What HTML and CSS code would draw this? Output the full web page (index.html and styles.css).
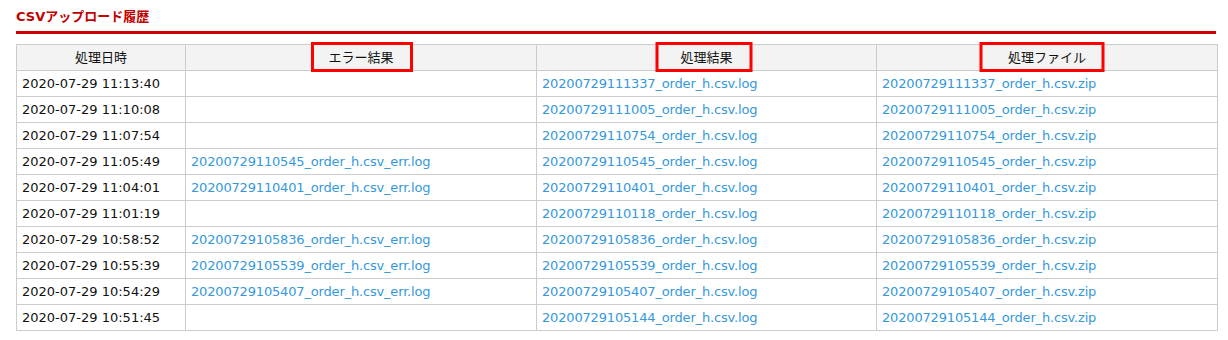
FILE: index.html
```html
<!DOCTYPE html>
<html lang="ja">
<head>
<meta charset="utf-8">
<title>CSVアップロード履歴</title>
<link rel="stylesheet" href="styles.css">
</head>
<body>
<div class="page">
  <h2 class="title">CSVアップロード履歴</h2>
  <table class="history">
    <colgroup>
      <col class="c1"><col class="c2"><col class="c3"><col class="c4">
    </colgroup>
    <thead>
      <tr>
        <th>処理日時</th>
        <th class="marked"><span class="box box-err"></span>エラー結果</th>
        <th class="marked"><span class="box box-res"></span>処理結果</th>
        <th class="marked"><span class="box box-file"></span>処理ファイル</th>
      </tr>
    </thead>
    <tbody>
      <tr><td>2020-07-29 11:13:40</td><td></td><td><a href="#">20200729111337_order_h.csv.log</a></td><td><a href="#">20200729111337_order_h.csv.zip</a></td></tr>
      <tr><td>2020-07-29 11:10:08</td><td></td><td><a href="#">20200729111005_order_h.csv.log</a></td><td><a href="#">20200729111005_order_h.csv.zip</a></td></tr>
      <tr><td>2020-07-29 11:07:54</td><td></td><td><a href="#">20200729110754_order_h.csv.log</a></td><td><a href="#">20200729110754_order_h.csv.zip</a></td></tr>
      <tr><td>2020-07-29 11:05:49</td><td><a href="#">20200729110545_order_h.csv_err.log</a></td><td><a href="#">20200729110545_order_h.csv.log</a></td><td><a href="#">20200729110545_order_h.csv.zip</a></td></tr>
      <tr><td>2020-07-29 11:04:01</td><td><a href="#">20200729110401_order_h.csv_err.log</a></td><td><a href="#">20200729110401_order_h.csv.log</a></td><td><a href="#">20200729110401_order_h.csv.zip</a></td></tr>
      <tr><td>2020-07-29 11:01:19</td><td></td><td><a href="#">20200729110118_order_h.csv.log</a></td><td><a href="#">20200729110118_order_h.csv.zip</a></td></tr>
      <tr><td>2020-07-29 10:58:52</td><td><a href="#">20200729105836_order_h.csv_err.log</a></td><td><a href="#">20200729105836_order_h.csv.log</a></td><td><a href="#">20200729105836_order_h.csv.zip</a></td></tr>
      <tr><td>2020-07-29 10:55:39</td><td><a href="#">20200729105539_order_h.csv_err.log</a></td><td><a href="#">20200729105539_order_h.csv.log</a></td><td><a href="#">20200729105539_order_h.csv.zip</a></td></tr>
      <tr><td>2020-07-29 10:54:29</td><td><a href="#">20200729105407_order_h.csv_err.log</a></td><td><a href="#">20200729105407_order_h.csv.log</a></td><td><a href="#">20200729105407_order_h.csv.zip</a></td></tr>
      <tr><td>2020-07-29 10:51:45</td><td></td><td><a href="#">20200729105144_order_h.csv.log</a></td><td><a href="#">20200729105144_order_h.csv.zip</a></td></tr>
    </tbody>
  </table>
</div>
</body>
</html>
```
FILE: styles.css
```css
html, body {
  margin: 0;
  padding: 0;
  background: #fff;
}
body {
  font-family: "DejaVu Sans", "Noto Sans CJK JP", sans-serif;
  font-size: 13px;
  color: #111;
}
.page {
  padding: 7px 12px 0 16px;
}
.title {
  margin: 0;
  width: 1200px;
  font-size: 13px;
  font-weight: bold;
  line-height: 20px;
  color: #c00000;
  padding-bottom: 4px;
  border-bottom: 3px solid #cc0000;
}
.history {
  margin-top: 10px;
  width: 1201px;
  border-collapse: collapse;
  table-layout: fixed;
}
.c1 { width: 169px; }
.c2 { width: 351px; }
.c3 { width: 340px; }
.c4 { width: 341px; }
.history th,
.history td {
  border: 1px solid #cccccc;
  height: 25px;
  padding: 0 5px;
  line-height: 25px;
  white-space: nowrap;
  overflow: hidden;
}
.history th {
  background: #f2f3f2;
  font-weight: normal;
  text-align: center;
  color: #111;
}
.history td {
  text-align: left;
}
.history a {
  color: #3598dc;
  text-decoration: none;
  letter-spacing: -0.17px;
}
.marked {
  position: relative;
  overflow: visible !important;
}
.box {
  position: absolute;
  top: -3px;
  left: 50%;
  height: 24px;
  border: 3px solid #ff0000;
  transform: translateX(-50%);
  box-sizing: content-box;
}
.box-err { width: 96px; margin-left: 1px; }
.box-res { width: 91px; margin-left: -3px; }
.box-file { width: 119px; margin-left: -5px; }
```
